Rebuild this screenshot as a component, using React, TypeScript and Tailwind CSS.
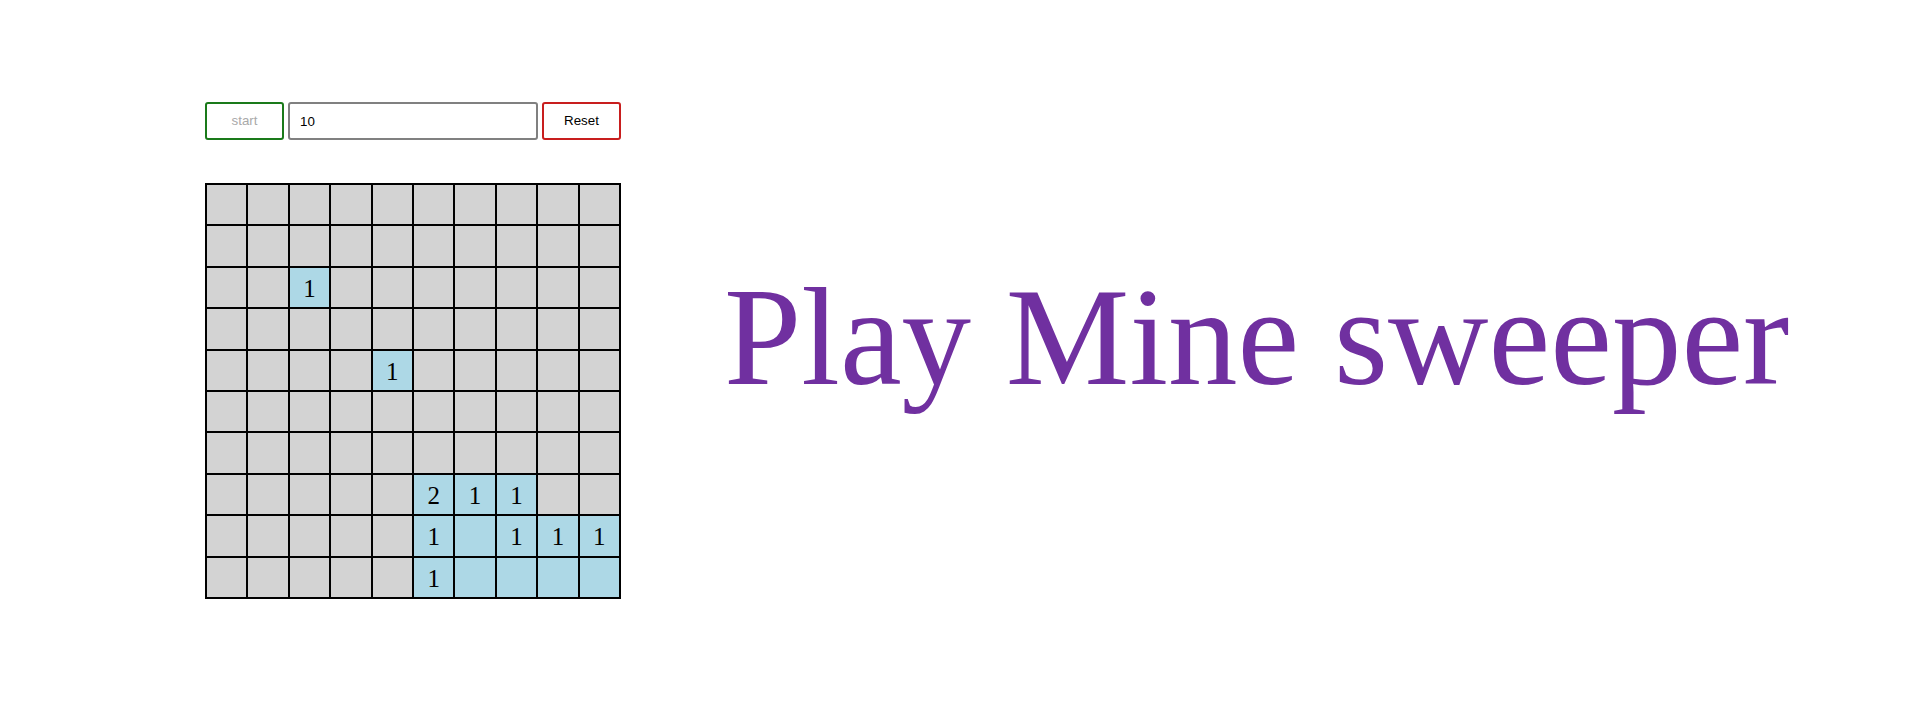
import React from "react";

const board: (string | null)[][] = [
  ["g", "g", "g", "g", "g", "g", "g", "g", "g", "g"],
  ["g", "g", "g", "g", "g", "g", "g", "g", "g", "g"],
  ["g", "g", "1", "g", "g", "g", "g", "g", "g", "g"],
  ["g", "g", "g", "g", "g", "g", "g", "g", "g", "g"],
  ["g", "g", "g", "g", "1", "g", "g", "g", "g", "g"],
  ["g", "g", "g", "g", "g", "g", "g", "g", "g", "g"],
  ["g", "g", "g", "g", "g", "g", "g", "g", "g", "g"],
  ["g", "g", "g", "g", "g", "2", "1", "1", "g", "g"],
  ["g", "g", "g", "g", "g", "1", "", "1", "1", "1"],
  ["g", "g", "g", "g", "g", "1", "", "", "", ""],
];

export default function App() {
  return (
    <div className="w-[1920px] h-[728px] bg-white flex items-start pl-[205px] pt-[102px]">
      <div className="w-[416px] flex flex-col">
        <div className="flex gap-[4px] h-[38px] text-[13.33px] font-['Liberation_Sans',Arial,sans-serif]">
          <button
            disabled
            className="w-[79px] h-[38px] border-2 border-[#1a7a1a] rounded-[3px] text-[#a9a9a9] bg-white"
          >
            start
          </button>
          <input
            defaultValue="10"
            className="w-[250px] h-[38px] border-2 border-[#808080] rounded-[3px] pl-[10px] text-black outline-none"
          />
          <button className="w-[79px] h-[38px] border-2 border-[#c81e1e] rounded-[3px] text-black bg-white">
            Reset
          </button>
        </div>
        <div className="mt-[43px] w-[416px] h-[416px] bg-black p-[2px] grid grid-cols-10 grid-rows-10 gap-[2px]">
          {board.flat().map((c, i) => (
            <div
              key={i}
              className={
                (c === "g" ? "bg-[#d3d3d3]" : "bg-[#add8e6]") +
                " flex items-center justify-center pt-[2px] text-[25px] leading-none text-black font-['Liberation_Serif','Times_New_Roman',serif]"
              }
            >
              {c !== "g" ? c : ""}
            </div>
          ))}
        </div>
      </div>
      <h1 className="ml-[103px] mt-[166px] text-[139px] leading-none text-[#7030a0] font-['Liberation_Serif','Times_New_Roman',serif] whitespace-nowrap">
        Play Mine sweeper
      </h1>
    </div>
  );
}
